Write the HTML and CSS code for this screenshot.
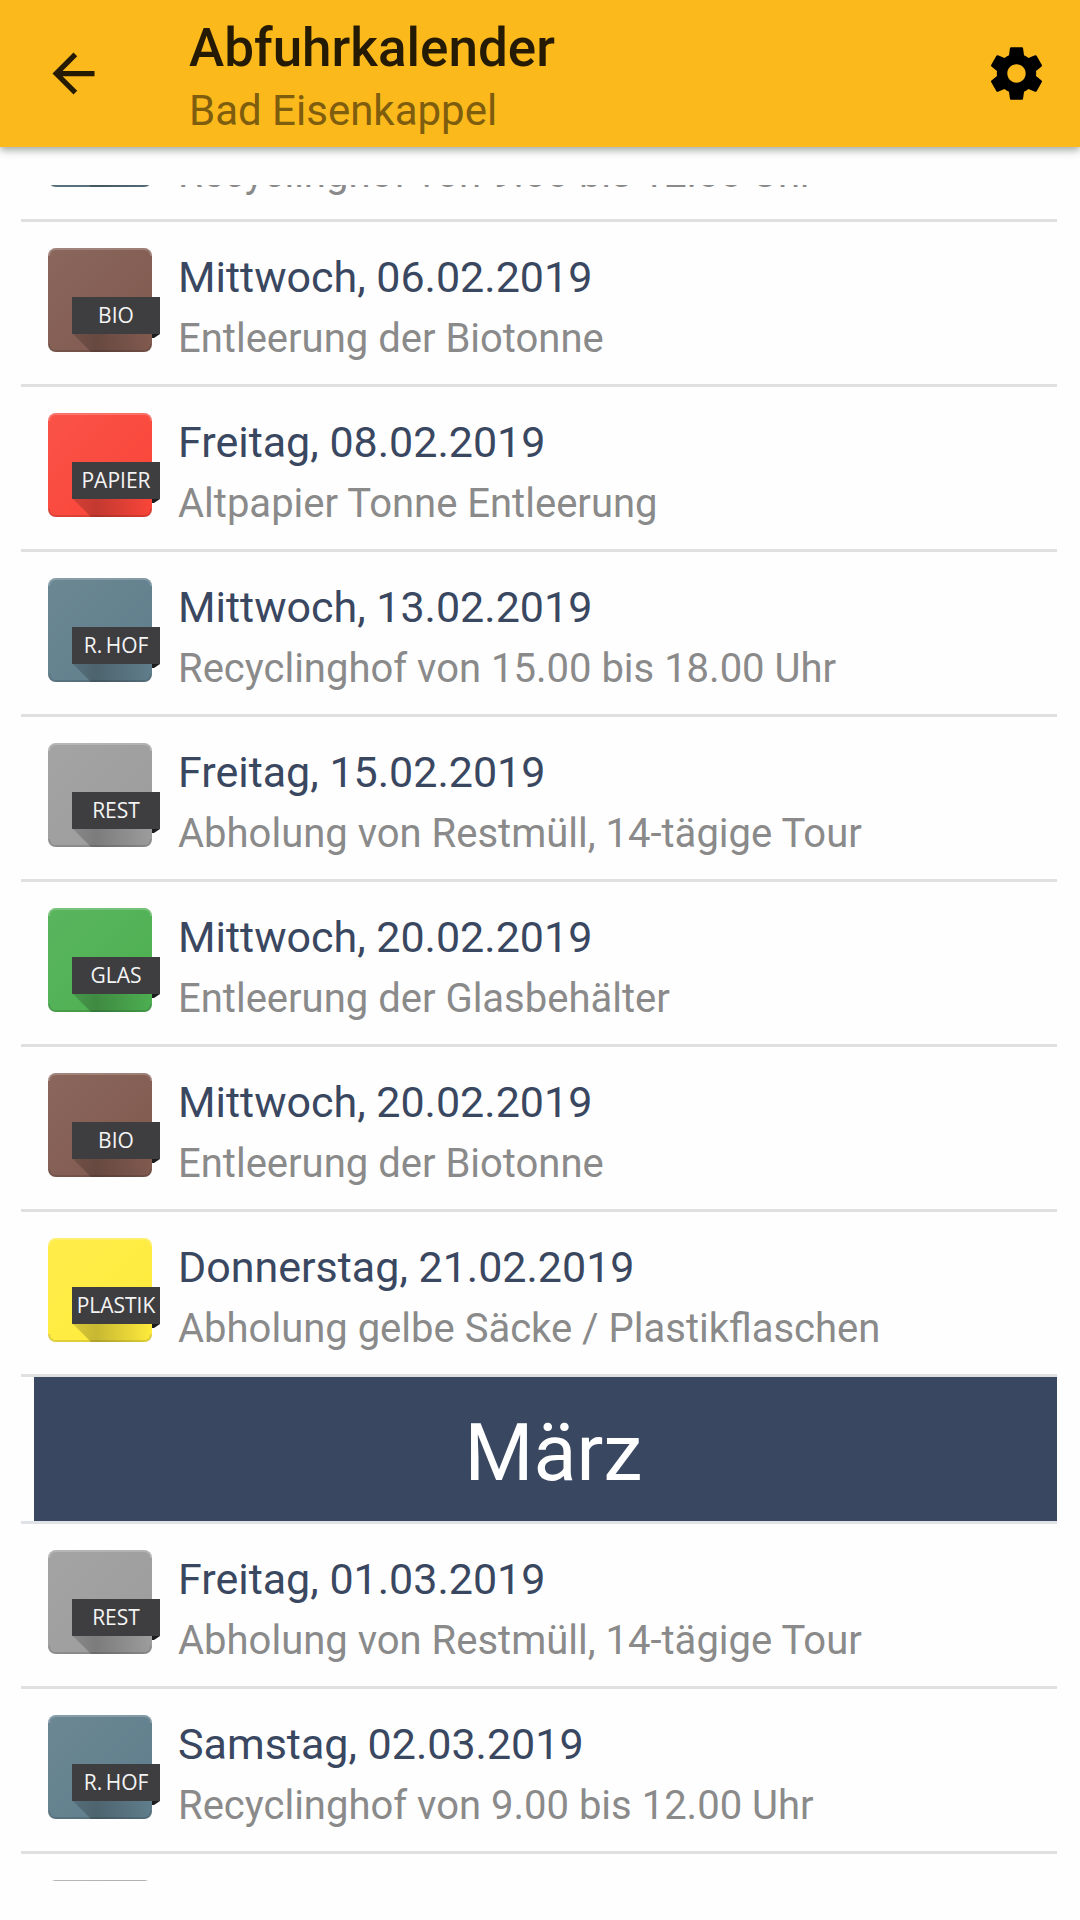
FILE: index.html
```
<!DOCTYPE html>
<html lang="de">
<head>
<meta charset="utf-8">
<meta name="viewport" content="width=device-width, initial-scale=1">
<title>Abfuhrkalender</title>
<link rel="stylesheet" href="styles.css">
</head>
<body>
<svg class="defs" aria-hidden="true">
  <defs>
    <linearGradient id="sheen" x1="0" y1="0" x2="1" y2="1">
      <stop offset="0" stop-color="#fff" stop-opacity=".08"/>
      <stop offset="1" stop-color="#fff" stop-opacity="0"/>
    </linearGradient>
    <linearGradient id="shade" x1="0" y1="0" x2="1" y2="0">
      <stop offset="0" stop-color="#000" stop-opacity=".15"/>
      <stop offset=".3" stop-color="#000" stop-opacity=".22"/>
      <stop offset="1" stop-color="#000" stop-opacity="0"/>
    </linearGradient>
    <g id="tile">
      <rect width="104" height="104" rx="8" fill="currentColor"/>
      <rect width="104" height="104" rx="8" fill="url(#sheen)"/>
      <path d="M1 8Q1 1 8 1H96Q103 1 103 8" fill="none" stroke="#fff" stroke-opacity=".2" stroke-width="2"/>
      <path d="M1 96Q1 103 8 103H96Q103 103 103 96" fill="none" stroke="#000" stroke-opacity=".12" stroke-width="2"/>
      <path d="M24 85L43 104H96Q104 104 104 96V85Z" fill="url(#shade)"/>
      <path d="M104 85H112V86L106 90H104Z" fill="#1c1c1e"/>
      <rect x="24" y="49" width="88" height="37" fill="#3e3e40"/>
    </g>
  </defs>
</svg>
<header class="bar">
  <button class="icon-button" type="button" aria-label="Zurück">
    <svg class="icon" viewBox="0 0 24 24"><path fill="#251a03" d="M20 11H7.83l5.59-5.59L12 4l-8 8 8 8 1.41-1.41L7.83 13H20v-2z"/></svg>
  </button>
  <div class="heading">
    <h1 class="title">Abfuhrkalender</h1>
    <p class="subtitle">Bad Eisenkappel</p>
  </div>
  <button class="icon-button" type="button" aria-label="Einstellungen">
    <svg class="icon" viewBox="0 0 24 24"><path d="M19.43 12.98c.04-.32.07-.64.07-.98s-.03-.66-.07-.98l2.11-1.65c.19-.15.24-.42.12-.64l-2-3.46c-.12-.22-.39-.3-.61-.22l-2.49 1c-.52-.4-1.08-.73-1.69-.98l-.38-2.65C14.46 2.18 14.25 2 14 2h-4c-.25 0-.46.18-.49.42l-.38 2.65c-.61.25-1.17.59-1.69.98l-2.49-1c-.23-.09-.49 0-.61.22l-2 3.46c-.13.22-.07.49.12.64l2.11 1.65c-.04.32-.07.65-.07.98s.03.66.07.98l-2.11 1.65c-.19.15-.24.42-.12.64l2 3.46c.12.22.39.3.61.22l2.49-1c.52.4 1.08.73 1.69.98l.38 2.65c.03.24.24.42.49.42h4c.25 0 .46-.18.49-.42l.38-2.65c.61-.25 1.17-.59 1.69-.98l2.49 1c.23.09.49 0 .61-.22l2-3.46c.12-.22.07-.49-.12-.64l-2.11-1.65zM12 15.5c-1.93 0-3.5-1.57-3.5-3.5s1.57-3.5 3.5-3.5 3.5 1.57 3.5 3.5-1.57 3.5-3.5 3.5z"/></svg>
  </button>
</header>
<main class="viewport">
  <ul class="list">
    <li class="row">
      <svg class="badge hof" viewBox="0 0 116 104"><use href="#tile"/></svg>
      <div class="entry"><p class="note">Recyclinghof von 9.00 bis 12.00 Uhr</p></div>
    </li>
    <li class="row">
      <svg class="badge bio" viewBox="0 0 116 104"><use href="#tile"/><text x="68" y="75">BIO</text></svg>
      <div class="entry"><p class="date">Mittwoch, 06.02.2019</p><p class="note">Entleerung der Biotonne</p></div>
    </li>
    <li class="row">
      <svg class="badge papier" viewBox="0 0 116 104"><use href="#tile"/><text x="68" y="75">PAPIER</text></svg>
      <div class="entry"><p class="date">Freitag, 08.02.2019</p><p class="note">Altpapier Tonne Entleerung</p></div>
    </li>
    <li class="row">
      <svg class="badge hof" viewBox="0 0 116 104"><use href="#tile"/><text x="68" y="75">R.&#8201;HOF</text></svg>
      <div class="entry"><p class="date">Mittwoch, 13.02.2019</p><p class="note">Recyclinghof von 15.00 bis 18.00 Uhr</p></div>
    </li>
    <li class="row">
      <svg class="badge rest" viewBox="0 0 116 104"><use href="#tile"/><text x="68" y="75">REST</text></svg>
      <div class="entry"><p class="date">Freitag, 15.02.2019</p><p class="note">Abholung von Restmüll, 14-tägige Tour</p></div>
    </li>
    <li class="row">
      <svg class="badge glas" viewBox="0 0 116 104"><use href="#tile"/><text x="68" y="75">GLAS</text></svg>
      <div class="entry"><p class="date">Mittwoch, 20.02.2019</p><p class="note">Entleerung der Glasbehälter</p></div>
    </li>
    <li class="row">
      <svg class="badge bio" viewBox="0 0 116 104"><use href="#tile"/><text x="68" y="75">BIO</text></svg>
      <div class="entry"><p class="date">Mittwoch, 20.02.2019</p><p class="note">Entleerung der Biotonne</p></div>
    </li>
    <li class="row">
      <svg class="badge plastik" viewBox="0 0 116 104"><use href="#tile"/><text x="68" y="75">PLASTIK</text></svg>
      <div class="entry"><p class="date">Donnerstag, 21.02.2019</p><p class="note">Abholung gelbe Säcke / Plastikflaschen</p></div>
    </li>
    <li class="month"><h2 class="month-name">März</h2></li>
    <li class="row">
      <svg class="badge rest" viewBox="0 0 116 104"><use href="#tile"/><text x="68" y="75">REST</text></svg>
      <div class="entry"><p class="date">Freitag, 01.03.2019</p><p class="note">Abholung von Restmüll, 14-tägige Tour</p></div>
    </li>
    <li class="row">
      <svg class="badge hof" viewBox="0 0 116 104"><use href="#tile"/><text x="68" y="75">R.&#8201;HOF</text></svg>
      <div class="entry"><p class="date">Samstag, 02.03.2019</p><p class="note">Recyclinghof von 9.00 bis 12.00 Uhr</p></div>
    </li>
    <li class="row">
      <svg class="badge rest" viewBox="0 0 116 104"><use href="#tile"/></svg>
    </li>
  </ul>
</main>
</body>
</html>
```

FILE: styles.css
```
* {
  box-sizing: border-box;
  margin: 0;
  padding: 0;
}

body {
  display: flex;
  flex-direction: column;
  height: 100vh;
  overflow: hidden;
  background: #fefefe;
  font-family: Roboto, "Liberation Sans", sans-serif;
}

.defs {
  position: absolute;
  width: 0;
  height: 0;
}

.bar {
  display: flex;
  flex: none;
  align-items: center;
  height: 147px;
  padding: 0 32px 0 42px;
  background: #fbb91c;
  box-shadow: 0 3px 8px rgba(40, 60, 40, 0.45);
}

.icon-button {
  display: flex;
  border: 0;
  background: none;
}

.icon {
  width: 63px;
  height: 63px;
}

.heading {
  flex: 1;
  padding: 10px 0 0 84px;
}

.title {
  color: #251a03;
  font-size: 53px;
  font-weight: 500;
  line-height: 64px;
}

.subtitle {
  color: #7e5d0e;
  font-size: 42px;
  line-height: 62px;
}

.viewport {
  flex: 1;
  min-height: 0;
  margin: 38px 23px 39px 21px;
  overflow: hidden;
}

/* The list rests in a scrolled position. */
.list {
  margin-top: -128px;
  list-style: none;
}

.row {
  display: flex;
  gap: 15px;
  height: 165px;
  padding: 26px 0 0 27px;
  border-bottom: 3px solid #e0e0e0;
}

.badge {
  flex: none;
  width: 116px;
  height: 104px;
}

.badge text {
  fill: #f4f4f4;
  font-family: "Open Sans", "Noto Sans", sans-serif;
  font-size: 21px;
  text-anchor: middle;
}

.bio { color: #80594e; }
.papier { color: #fa4438; }
.hof { color: #5f7d8b; }
.rest { color: #9c9c9c; }
.glas { color: #4caf50; }
.plastik { color: #ffeb3b; }

.entry {
  display: flex;
  flex-direction: column;
  gap: 4px;
  justify-content: flex-end;
  height: 120px;
  margin-left: -1px;
}

.date,
.note {
  line-height: 58px;
  white-space: nowrap;
}

.date {
  color: #3a4760;
  font-size: 43px;
}

.note {
  color: #8a8a8a;
  font-size: 40px;
}

.month {
  padding-left: 13px;
  border-bottom: 3px solid #dfe3e8;
}

.month-name {
  padding: 8px 0 0 16px;
  background: #3a4760;
  color: #fff;
  font-size: 79px;
  font-weight: 400;
  line-height: 136px;
  text-align: center;
}
```
